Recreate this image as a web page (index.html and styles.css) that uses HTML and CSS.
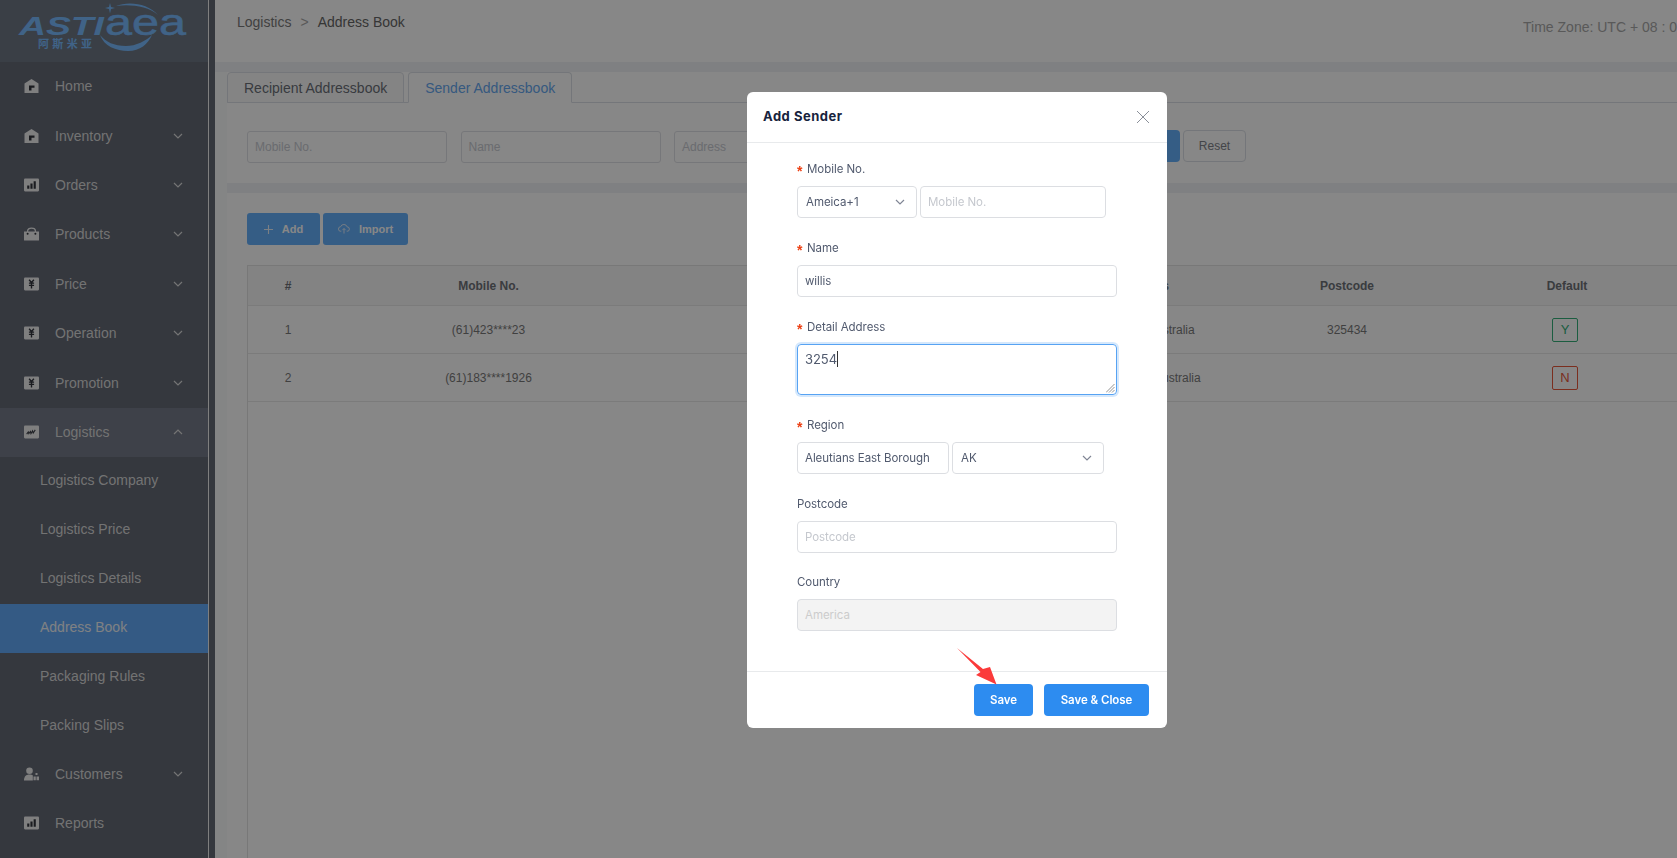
FILE: index.html
```html
<!DOCTYPE html>
<html lang="en">
<head>
<meta charset="utf-8">
<title>Address Book</title>
<link rel="stylesheet" href="styles.css">
</head>
<body>
<svg class="defs" width="0" height="0" aria-hidden="true">
  <defs>
    <symbol id="i-home" viewBox="0 0 14 14"><path d="M0 4.600 7 0l7 4.600V14H0z" fill="currentColor"/><path d="M4.500 6.500h5.500v2.200H7V11.500H4.500z" fill="#33363e"/></symbol>
    <symbol id="i-chart" viewBox="0 0 14 12"><rect width="14" height="12" rx="1" fill="currentColor"/><path d="M3 6.500h2v3H3zM6 4.500h2v5H6zM9 2.500h2v7H9z" fill="#33363e"/></symbol>
    <symbol id="i-bag" viewBox="0 0 15 13"><path d="M0 4h15v8.500a.5.5 0 0 1-.5.5H.5a.5.5 0 0 1-.5-.5z" fill="currentColor"/><path d="M3.600 6V3.500C3.600 1.500 5.200.7 7.500.7s3.900.8 3.900 2.800V6" fill="none" stroke="currentColor" stroke-width="1.300"/><circle cx="3.600" cy="6.300" r="1" fill="#33363e"/><circle cx="11.400" cy="6.300" r="1" fill="#33363e"/></symbol>
    <symbol id="i-yen" viewBox="0 0 14 12"><rect width="14" height="12" rx="1" fill="currentColor"/><path d="M4.800 2 7 4.800 9.200 2M4.600 5.200h4.800M4.600 7.300h4.800M7 4.800v5.400" fill="none" stroke="#33363e" stroke-width="1.300"/></symbol>
    <symbol id="i-trend" viewBox="0 0 14 12"><rect width="14" height="12" rx="1" fill="currentColor"/><path d="m2.500 8 1.500-2 .5 1.500L6 5.500l.5 2L8 5l.6 2L10.500 4" fill="none" stroke="#3c3f47" stroke-width="1"/></symbol>
    <symbol id="i-users" viewBox="0 0 15 13"><circle cx="5.500" cy="3.300" r="3.300" fill="currentColor"/><path d="M0 13c0-4 2-6 5.500-6 1.500 0 2.500.4 3.300 1v5z" fill="currentColor"/><path d="M11.500 5.500h2v2h-2zM9.500 9h2.300v3.800H9.500zM12.500 9H15v3.800h-2.500z" fill="currentColor"/></symbol>
    <symbol id="i-down" viewBox="0 0 10 6"><path d="m1 1 4 4 4-4" fill="none" stroke="currentColor" stroke-width="1.200"/></symbol>
  </defs>
</svg>

<div class="app">
  <aside class="sidebar">
    <div class="logo">
      <svg class="logo-svg" width="208" height="62" viewBox="0 0 208 62">
        <path d="M116 6C128 1 148 3 158 15 148 6 130 4 116 6z" fill="#79bcff"/>
        <path d="M100 35C104 46 116 51 128 51 140 51 148 44 152 35 146 41 136 46 126 46 114 46 106 42 100 35z" fill="#79bcff"/>
        <path d="M110 3l1 4 4 1-4 1-1 4.500-1-4.500-4-1 4-1z" fill="#79bcff"/>
        <text class="logo-main" x="19" y="35" textLength="85" lengthAdjust="spacingAndGlyphs">ASTI</text>
        <text class="logo-round" x="105" y="35" textLength="81" lengthAdjust="spacingAndGlyphs">aea</text>
        <text class="logo-cn" x="38" y="48" textLength="54">阿斯米亚</text>
      </svg>
    </div>
    <nav class="menu">
      <a class="item"><svg class="ic"><use href="#i-home"/></svg><span>Home</span></a>
      <a class="item"><svg class="ic"><use href="#i-home"/></svg><span>Inventory</span><svg class="chev"><use href="#i-down"/></svg></a>
      <a class="item"><svg class="ic"><use href="#i-chart"/></svg><span>Orders</span><svg class="chev"><use href="#i-down"/></svg></a>
      <a class="item"><svg class="ic"><use href="#i-bag"/></svg><span>Products</span><svg class="chev"><use href="#i-down"/></svg></a>
      <a class="item"><svg class="ic"><use href="#i-yen"/></svg><span>Price</span><svg class="chev"><use href="#i-down"/></svg></a>
      <a class="item"><svg class="ic"><use href="#i-yen"/></svg><span>Operation</span><svg class="chev"><use href="#i-down"/></svg></a>
      <a class="item"><svg class="ic"><use href="#i-yen"/></svg><span>Promotion</span><svg class="chev"><use href="#i-down"/></svg></a>
      <a class="item open"><svg class="ic"><use href="#i-trend"/></svg><span>Logistics</span><svg class="chev up"><use href="#i-down"/></svg></a>
      <a class="sub">Logistics Company</a>
      <a class="sub">Logistics Price</a>
      <a class="sub">Logistics Details</a>
      <a class="sub active">Address Book</a>
      <a class="sub">Packaging Rules</a>
      <a class="sub">Packing Slips</a>
      <a class="item low"><svg class="ic"><use href="#i-users"/></svg><span>Customers</span><svg class="chev"><use href="#i-down"/></svg></a>
      <a class="item low"><svg class="ic"><use href="#i-chart"/></svg><span>Reports</span></a>
    </nav>
  </aside>

  <main class="main">
    <header class="topbar">
      <div class="crumbs"><span>Logistics</span><i>&gt;</i><span class="here">Address Book</span></div>
      <div class="zone">Time Zone: UTC + 08 : 0</div>
    </header>
    <section class="content">
      <div class="tabs">
        <div class="tab">Recipient Addressbook</div>
        <div class="tab on">Sender Addressbook</div>
      </div>
      <div class="filters">
        <div class="box">Mobile No.</div>
        <div class="box">Name</div>
        <div class="box">Address</div>
        <div class="search"></div>
        <div class="reset">Reset</div>
      </div>
      <div class="list">
        <div class="actions">
          <div class="btn b-add"><svg width="9" height="9" viewBox="0 0 9 9"><path d="M4.500 0v9M0 4.500h9" stroke="currentColor" stroke-width="1.100"/></svg>Add</div>
          <div class="btn b-imp"><svg width="12" height="10" viewBox="0 0 13 11"><path d="M3.500 8H3A2.500 2.500 0 0 1 2.800 3 3.800 3.800 0 0 1 10 3.200 2.400 2.400 0 0 1 10 8h-.5M6.500 10.500V5M4.700 6.800l1.800-1.800 1.800 1.800" fill="none" stroke="currentColor"/></svg>Import</div>
        </div>
        <div class="table">
          <div class="row head">
            <div class="c-n">#</div><div class="c-m">Mobile No.</div><div class="c-a a0">Address</div><div class="c-p">Postcode</div><div class="c-d">Default</div>
          </div>
          <div class="row">
            <div class="c-n">1</div><div class="c-m">(61)423****23</div><div class="c-a a1">Australia</div><div class="c-p">325434</div><div class="c-d"><span class="tag yes">Y</span></div>
          </div>
          <div class="row">
            <div class="c-n">2</div><div class="c-m">(61)183****1926</div><div class="c-a a2">Australia</div><div class="c-p"></div><div class="c-d"><span class="tag no">N</span></div>
          </div>
        </div>
      </div>
    </section>
  </main>
</div>

<div class="overlay"></div>

<div class="modal">
  <div class="m-head">
    <div class="m-title">Add Sender</div>
    <svg class="m-close" width="14" height="14" viewBox="0 0 14 14"><path d="m1 1 12 12M13 1 1 13" stroke="#8a8f99" stroke-width="1"/></svg>
  </div>
  <div class="m-body">
    <div class="field">
      <label class="req">Mobile No.</label>
      <div class="line">
        <div class="ctl sel w-code">Ameica+1<svg class="chev2"><use href="#i-down"/></svg></div>
        <div class="ctl ph w-phone">Mobile No.</div>
      </div>
    </div>
    <div class="field">
      <label class="req">Name</label>
      <div class="ctl full">willis</div>
    </div>
    <div class="field">
      <label class="req">Detail Address</label>
      <div class="ctl area full"><span class="typed">3254</span><svg class="grip" width="9" height="9" viewBox="0 0 9 9"><path d="M8.500 0 0 8.500M8.500 3 3 8.500M8.500 6 6 8.500" stroke="#666" stroke-width=".7"/></svg></div>
    </div>
    <div class="field">
      <label class="req">Region</label>
      <div class="line">
        <div class="ctl w-half">Aleutians East Borough</div>
        <div class="ctl sel w-half">AK<svg class="chev2"><use href="#i-down"/></svg></div>
      </div>
    </div>
    <div class="field">
      <label>Postcode</label>
      <div class="ctl ph full">Postcode</div>
    </div>
    <div class="field field-last">
      <label>Country</label>
      <div class="ctl off full">America</div>
    </div>
  </div>
  <div class="m-foot">
    <div class="pbtn">Save</div>
    <div class="pbtn">Save &amp; Close</div>
  </div>
  <svg class="arrow" width="42" height="38" viewBox="0 0 42 38"><path d="M0 0 26 21 33 19 39.500 36.500 19 27 23.500 24z" fill="#fb3a3a"/></svg>
</div>
</body>
</html>
```
FILE: styles.css
```css
* { box-sizing: border-box; }
html, body { margin: 0; height: 100%; overflow: hidden; }
body { font-family: "Liberation Sans", Arial, sans-serif; font-size: 12px; color: #6e7178; background: #fafbfc; }
.defs { position: absolute; }
.app { display: flex; height: 858px; width: 1677px; overflow: hidden; }

.sidebar { width: 215px; flex: none; background: #646a76; border-right: 6px solid #646a76; box-shadow: inset -1px 0 0 #f0f0f0; }
.logo { height: 62px; background: #6e7885; margin-right: 1px; }
.logo-svg { display: block; }
.logo-main { font: italic 700 25px "Liberation Sans", Arial, sans-serif; fill: #79bcff; }
.logo-round { font: 400 36px "Liberation Sans", Arial, sans-serif; fill: #79bcff; stroke: #79bcff; stroke-width: .5px; }
.logo-cn { font: 700 11px "Noto Sans CJK SC", sans-serif; fill: #79bcff; }

.menu { display: flex; flex-direction: column; color: #d9d9d9; font-size: 14px; margin-right: 1px; }
.item { height: 49.4px; display: flex; align-items: center; padding: 0 25px 1px 24px; }
.item span { margin-left: 16px; flex: 1; }
.item.low { height: 49px; padding-bottom: 4px; }
.item.open { background: #757b8a; }
.ic { width: 15px; height: 14px; color: #f0f0f0; flex: none; }
.chev { width: 10px; height: 6px; color: #dcdcdc; flex: none; }
.chev.up { transform: rotate(180deg); }
.sub { height: 49px; display: flex; align-items: center; padding: 0 0 4px 40px; }
.sub.active { background: #62aafa; color: #f0f4f8; }

.main { flex: 1; min-width: 0; }
.topbar { height: 72px; background: #fff; border-bottom: 10px solid #f0f2f5; display: flex; justify-content: space-between; }
.crumbs { font-size: 14px; color: #7a7a7a; padding: 14px 0 0 22px; display: flex; height: 30px; line-height: 16px; }
.crumbs .here { color: #666; }
.crumbs i { font-style: normal; color: #a8a8a8; margin: 0 9px; }
.zone { font-size: 14px; color: #a8a8a8; padding-top: 19px; white-space: nowrap; flex: none; line-height: 16px; }
.content { padding-left: 12px; }

.tabs { height: 31px; display: flex; gap: 4px; border-bottom: 1px solid #dcdfe6; background: #fff; }
.tab { height: 31px; padding: 0 16px; line-height: 30px; font-size: 14px; color: #6b7078; background: #fafafa; border: 1px solid #dcdfe6; border-radius: 4px 4px 0 0; }
.tab.on { color: #66a8f0; background: #fff; border-bottom-color: #fff; }

.filters { height: 80px; background: #fff; display: flex; align-items: flex-start; gap: 13.500px; padding: 28px 0 0 20px; }
.box { height: 32px; width: 200px; border: 1px solid #dfe1e6; border-radius: 3px; color: #c8cbd2; padding: 0 7px; line-height: 30px; }
.search { width: 292px; height: 32px; background: #65b0fb; border-radius: 4px; margin-top: -1px; }
.reset { width: 63px; height: 32px; margin: -1px 0 0 -10px; border: 1px solid #dcdfe6; border-radius: 4px; text-align: center; line-height: 30px; color: #80838a; }

.list { border-top: 10px solid #f0f2f5; background: #fff; height: 675px; padding: 20px 0 0 20px; }
.actions { display: flex; gap: 3px; height: 32px; }
.btn { height: 32px; border-radius: 3px; background: #65b0fb; color: #fff; font-weight: 700; display: flex; align-items: center; justify-content: center; gap: 9px; font-size: 11px; }
.b-add { width: 73px; }
.b-imp { width: 85px; }
.btn svg { color: #e8f0fa; }

.table { margin-top: 20px; border-left: 1px solid #e3e3e3; border-top: 1px solid #e3e3e3; height: 700px; }
.row { display: flex; align-items: center; height: 48px; border-bottom: 1px solid #e8e8e8; text-align: center; color: #7a7a7a; }
.row.head { height: 40px; font-weight: 700; background: #f7f7f7; color: #6e7178; }
.c-n { width: 80px; flex: none; }
.c-m { width: 321px; flex: none; }
.c-a { width: 628px; flex: none; text-align: left; white-space: nowrap; }
.a0 { padding-left: 472px; }
.a1 { padding-left: 499px; }
.a2 { padding-left: 505px; }
.c-p { width: 140px; flex: none; }
.c-d { width: 300px; flex: none; }
.tag { display: inline-block; width: 26px; height: 24px; line-height: 22px; border-radius: 2px; font-size: 13px; border: 1px solid; margin-right: 4px; }
.tag.yes { color: #33b07a; border-color: #33b07a; }
.tag.no { color: #e8573a; border-color: #e8573a; }

.overlay { position: fixed; inset: 0; background: rgba(0,0,0,.47); }

.modal { position: fixed; left: 747px; top: 92px; width: 420px; height: 636px; background: #fff; border-radius: 6px; font-family: Inter, "Liberation Sans", sans-serif; color: #515a6e; font-size: 11.500px; letter-spacing: -.05px; display: flex; flex-direction: column; }
.m-head { height: 51px; flex: none; border-bottom: 1px solid #e8eaec; display: flex; align-items: center; justify-content: space-between; padding: 0 17px 0 16px; }
.m-title { font-weight: 700; font-size: 13px; color: #17233d; letter-spacing: .5px; padding-bottom: 2px; }
.m-body { flex: 1; padding: 19px 0 0 50px; display: flex; flex-direction: column; gap: 23px; }
.field { display: flex; flex-direction: column; gap: 9px; }
.field-last { margin-top: -1px; }
.field label { line-height: 15px; height: 15px; }
.req::before { content: "*"; display: inline-block; width: 10px; color: #ed4014; font: 700 14px/1 "Liberation Sans", sans-serif; vertical-align: -3px; }
.line { display: flex; gap: 3px; }
.ctl { height: 32px; border: 1px solid #dcdee2; border-radius: 4px; padding: 0 7px; line-height: 30px; position: relative; white-space: nowrap; }
.full { width: 320px; }
.w-code { width: 120px; }
.w-phone { width: 186px; }
.w-half { width: 152px; }
.sel { padding-left: 8px; }
.ph { color: #c5c8ce; }
.off { background: #f3f3f3; color: #ccc; }
.chev2 { position: absolute; right: 11px; top: 12px; width: 10px; height: 6px; color: #808695; }
.area { height: 51px; border-color: #57a3f3; box-shadow: 0 0 0 2px rgba(45,140,240,.2); padding-top: 6px; font-size: 13px; line-height: 16px; }
.typed { display: inline-block; height: 16px; line-height: 16px; border-right: 1px solid #333; }
.grip { position: absolute; right: 1px; bottom: 1px; }
.m-foot { height: 57px; flex: none; border-top: 1px solid #e8eaec; display: flex; justify-content: flex-end; align-items: flex-start; gap: 11px; padding: 12px 18px 0 0; }
.pbtn { height: 32px; background: #2d8cf0; color: #fff; border-radius: 4px; font-weight: 600; line-height: 32px; text-align: center; width: 59px; }
.pbtn:last-child { width: 105px; }
.arrow { position: absolute; left: 210px; top: 556px; }
```
